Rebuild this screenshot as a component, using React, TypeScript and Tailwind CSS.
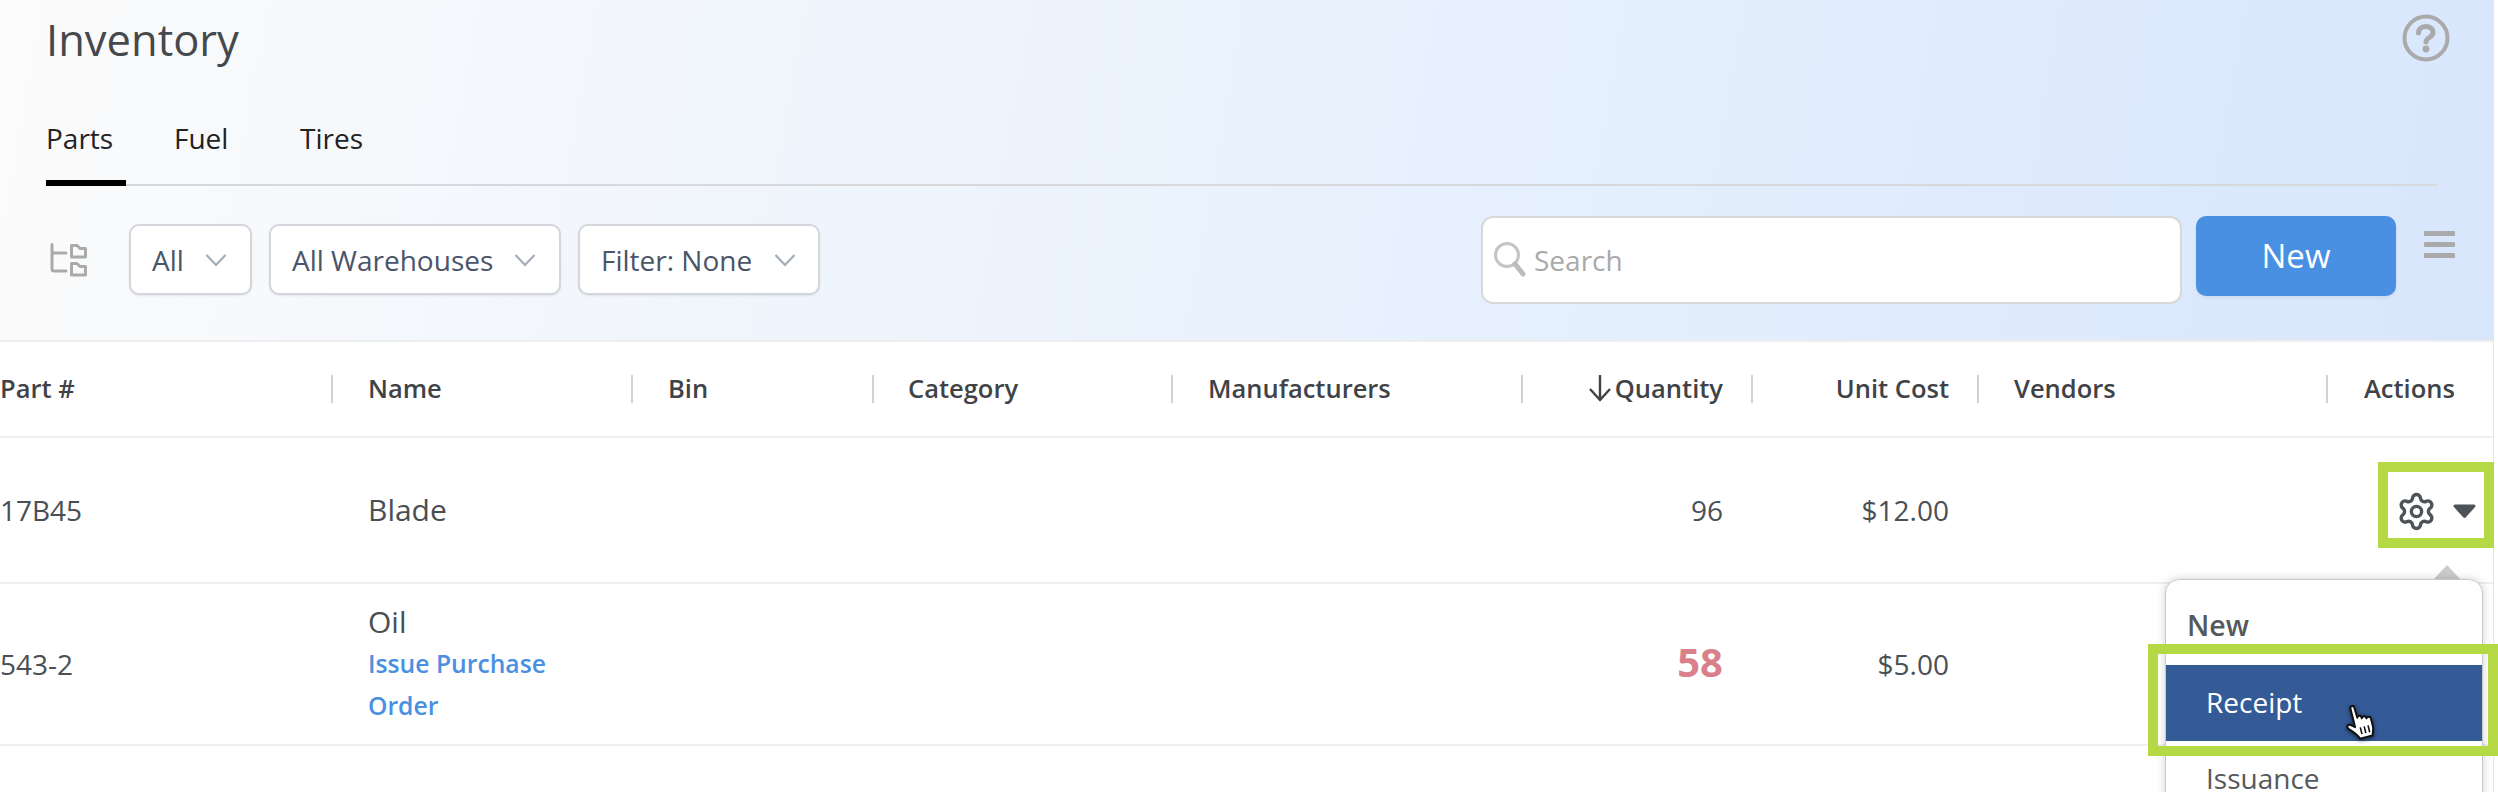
import { Settings } from "lucide-react";

const font = { fontFamily: '"Open Sans", "Noto Sans", sans-serif' };

function Chevron() {
  return (
    <svg width="22" height="14" viewBox="0 0 22 14" fill="none" className="shrink-0">
      <path d="M1.5 2 L11 12 L20.5 2" stroke="#a3acb8" strokeWidth="2.2" />
    </svg>
  );
}

function SelectBox({ label, className }: { label: string; className: string }) {
  return (
    <div className={`h-[71px] flex items-center justify-between bg-white border-2 border-[#d3d6db] rounded-[10px] shadow-[0_1px_2px_rgba(0,0,0,0.08)] text-[#4a5568] text-[28px] ${className}`}>
      <span>{label}</span>
      <Chevron />
    </div>
  );
}

function TreeIcon() {
  return (
    <svg width="38" height="34" viewBox="0 0 38 34" fill="none" stroke="#aaaaaa" strokeWidth="3" strokeLinecap="round" strokeLinejoin="round" className="shrink-0">
      <path d="M2 1.5 V26 Q2 28 4 28 H16 M2 10 H16" />
      <path d="M21.5 2.5 H27 L30 5.5 H35.5 V14 H21.5 Z" />
      <path d="M21.5 20.5 H27 L30 23.5 H35.5 V32 H21.5 Z" />
    </svg>
  );
}

function Head({ label, pad, right, first, arrow }: { label: string; pad: string; right?: boolean; first?: boolean; arrow?: boolean }) {
  return (
    <div className="h-[94px] flex items-center">
      <div className={`w-full h-[28px] flex items-center ${first ? "" : "border-l-2 border-[#d2d2d2]"} ${right ? "justify-end" : ""} ${pad}`}>
        {arrow && (
          <svg width="24" height="30" viewBox="0 0 24 30" fill="none" stroke="#3f4347" strokeWidth="2.4" className="mr-[3px] mb-[2px]">
            <path d="M12 2 V27 M2 16 L12 27 L22 16" />
          </svg>
        )}
        <span className="text-[25.5px] font-semibold text-[#3f4347] leading-none whitespace-nowrap">{label}</span>
      </div>
    </div>
  );
}

const cols = "grid grid-cols-[331px_300px_241px_299px_350px_230px_226px_349px_168px]";

function HandCursor() {
  return (
    <svg width="36" height="38" viewBox="0 0 36 38" className="absolute left-[2343px] top-[703px] drop-shadow-[0_1px_2px_rgba(0,0,0,0.6)]">
      <g transform="rotate(-14 18 19)">
        <path
          d="M11 3 C11 1 15 1 15 3 L15.5 14 C16 12 19.5 12 19.5 14.5 L19.8 15.5 C20.5 13.5 24 13.5 24 16 L24.2 16.8 C25 15 28.5 15.5 28.5 18 L28.5 26 C28.5 30 27 31 26 35 L13 35 C12 31 9 28 4.5 23 C2 20 5 17.5 7.5 19.5 L11 22.5 Z"
          fill="#ffffff"
          stroke="#111111"
          strokeWidth="2"
          strokeLinejoin="round"
        />
        <path d="M16 24 V31 M20 24 V31 M24 24 V31" stroke="#111111" strokeWidth="1.6" fill="none" />
      </g>
    </svg>
  );
}

export default function App() {
  return (
    <div className="relative w-full h-[792px] overflow-hidden bg-white" style={font}>
      <div className="w-[2494px] h-[792px] border-r border-[#e6e6e6]">
        <header className="h-[340px] pl-[46px] pr-[56px] bg-[linear-gradient(100deg,#fbfbfb_0%,#e6f0fd_60%,#d8e6fc_100%)]">
          <div className="h-[80px] flex items-center justify-between">
            <h1 className="text-[43.5px] text-[#45494d] leading-none">Inventory</h1>
            <svg width="48" height="48" viewBox="0 0 48 48" fill="none" className="-mr-[13px] -mt-[4px]">
              <circle cx="24" cy="24" r="21.5" stroke="#aaaaaa" strokeWidth="4" />
              <path d="M16.5 19 C16.5 10.5 31 10.5 31 18.5 C31 23.5 24 23.5 24 28" stroke="#aaaaaa" strokeWidth="5" strokeLinecap="round" />
              <circle cx="24" cy="35" r="3.4" fill="#aaaaaa" />
            </svg>
          </div>
          <nav className="h-[106px] flex items-end gap-[48px] border-b-2 border-[#d6d8db] text-[28px] leading-[38px] text-[#222222]">
            <div className="w-[80px] h-[67px] -mb-[2px] border-b-[6px] border-black">Parts</div>
            <div className="w-[78px] h-[65px]">Fuel</div>
            <div className="h-[65px]">Tires</div>
          </nav>
          <div className="mt-[30px] flex items-start justify-between">
            <div className="mt-[8px] flex items-center gap-[17px]">
              <div className="w-[66px] pl-[4px] flex items-center"><TreeIcon /></div>
              <SelectBox label="All" className="w-[123px] pl-[21px] pr-[23px]" />
              <SelectBox label="All Warehouses" className="w-[292px] pl-[21px] pr-[23px]" />
              <SelectBox label="Filter: None" className="w-[242px] pl-[21px] pr-[22px]" />
            </div>
            <div className="flex items-start -mr-[18px]">
              <div className="w-[701px] h-[88px] flex items-center gap-[7px] pl-[10px] bg-white border-2 border-[#d8d8d8] rounded-[12px]">
                <svg width="34" height="36" viewBox="0 0 34 36" fill="none" className="shrink-0 -mt-[2px]">
                  <circle cx="14" cy="14" r="11.5" stroke="#c4c4c4" strokeWidth="3" />
                  <path d="M22 23 L30 33" stroke="#bcbcbc" strokeWidth="5" strokeLinecap="round" />
                </svg>
                <span className="text-[28px] text-[#a9a9a9]">Search</span>
              </div>
              <button className="ml-[14px] w-[200px] h-[80px] rounded-[10px] bg-[#4a90e2] text-white text-[33px] font-medium shadow-[0_2px_3px_rgba(0,0,0,0.06)]">New</button>
              <div className="ml-[28px] mt-[15px] w-[31px] flex flex-col gap-[6px]">
                <div className="h-[5px] rounded-[1px] bg-[#aaaaaa]" />
                <div className="h-[5px] rounded-[1px] bg-[#aaaaaa]" />
                <div className="h-[5px] rounded-[1px] bg-[#aaaaaa]" />
              </div>
            </div>
          </div>
        </header>

        <div className={`${cols} border-t-2 border-b-2 border-[#eeeeee]`}>
          <Head label="Part #" pad="" first />
          <Head label="Name" pad="pl-[35px]" />
          <Head label="Bin" pad="pl-[35px]" />
          <Head label="Category" pad="pl-[34px]" />
          <Head label="Manufacturers" pad="pl-[35px]" />
          <Head label="Quantity" pad="pr-[28px]" right arrow />
          <Head label="Unit Cost" pad="pr-[28px]" right />
          <Head label="Vendors" pad="pl-[35px]" />
          <Head label="Actions" pad="pl-[36px]" />
        </div>

        <div className={`${cols} h-[146px] items-center border-b-2 border-[#eeeeee] text-[28px] text-[#4a4f54]`}>
          <div>17B45</div>
          <div className="pl-[37px] text-[30px] -mt-[2px]">Blade</div>
          <div />
          <div />
          <div />
          <div className="pr-[28px] text-right">96</div>
          <div className="pr-[28px] text-right">$12.00</div>
          <div />
          <div className="flex items-center pl-[70px] pt-[2px]">
            <Settings size={41} strokeWidth={2} className="text-[#4d5358] shrink-0" />
            <svg width="25" height="17" viewBox="0 0 25 17" className="ml-[15px] shrink-0">
              <path d="M3 3 H22 L12.5 13.5 Z" fill="#4d5358" stroke="#4d5358" strokeWidth="3" strokeLinejoin="round" />
            </svg>
          </div>
        </div>

        <div className={`${cols} h-[162px] items-center border-b-2 border-[#eeeeee] text-[28px] text-[#4a4f54]`}>
          <div>543-2</div>
          <div className="pl-[37px] pr-[60px]">
            <div className="text-[30px] leading-[40px]">Oil</div>
            <div className="text-[24.7px] leading-[42px] font-semibold text-[#4a90e2] pt-[1px]">Issue Purchase Order</div>
          </div>
          <div />
          <div />
          <div />
          <div className="pr-[28px] text-right text-[40px] font-bold text-[#d9808a] leading-none -mt-[4px]">58</div>
          <div className="pr-[28px] text-right">$5.00</div>
          <div />
          <div />
        </div>
      </div>

      {/* popover */}
      <div className="absolute left-[2433px] top-[565px] w-0 h-0 border-l-[14px] border-r-[14px] border-b-[15px] border-l-transparent border-r-transparent border-b-[#cccccc]" />
      <div className="absolute left-[2165px] top-[579px] w-[318px] h-[260px] bg-white border border-[#c8c8c8] rounded-[14px] shadow-[0_0_10px_rgba(0,0,0,0.18)]">
        <div className="h-[85px] pl-[21px] pt-[25px] text-[28.5px] font-semibold text-[#55595d] leading-[40px]">New</div>
        <div className="h-[76px] flex items-center pl-[40px] pb-[3px] bg-[#345b96] text-white text-[28px]">Receipt</div>
        <div className="pl-[40px] pt-[14px] text-[28px] text-[#55595d] leading-[46px]">Issuance</div>
      </div>
      <HandCursor />

      {/* highlight annotations */}
      <div className="absolute left-[2378px] top-[462px] w-[116px] h-[86px] border-[10px] border-[#b5d944]" />
      <div className="absolute left-[2148px] top-[644px] w-[350px] h-[112px] border-[10px] border-[#b5d944]" />
    </div>
  );
}
